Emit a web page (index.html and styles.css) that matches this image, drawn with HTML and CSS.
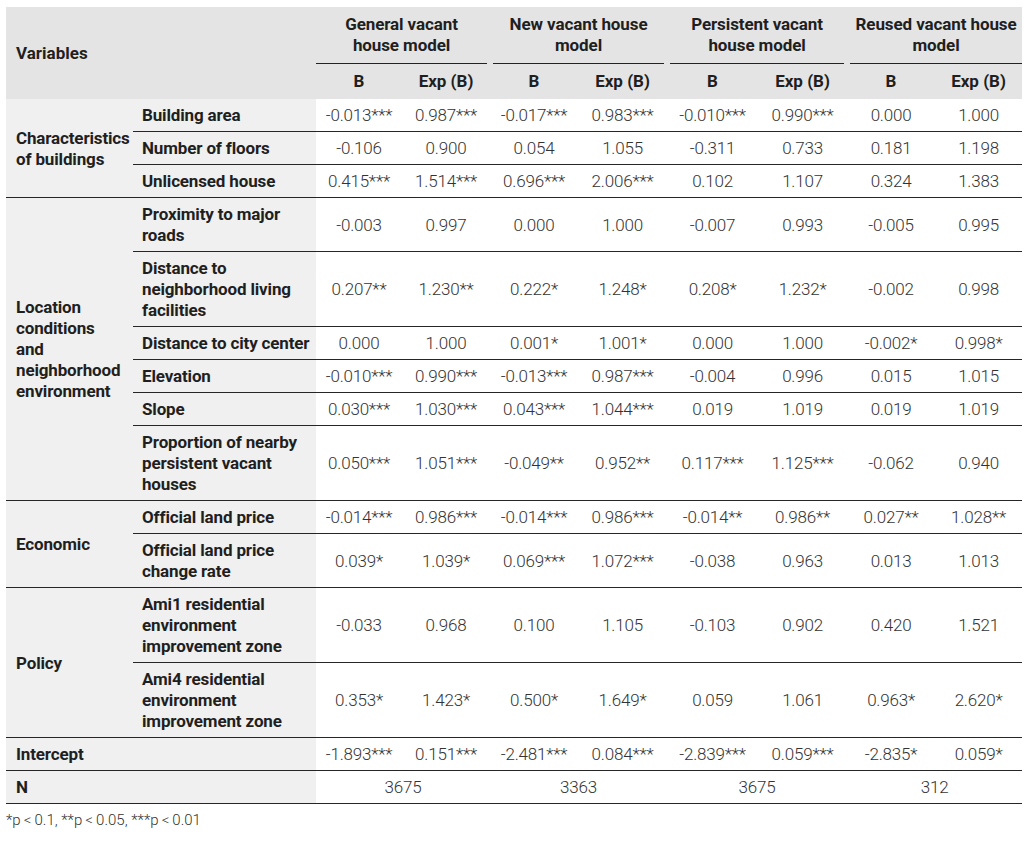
FILE: index.html
```html
<!DOCTYPE html>
<html lang="en">
<head>
<meta charset="utf-8">
<title>Logistic regression results</title>
<link rel="stylesheet" href="styles.css">
</head>
<body>
<table class="results">
  <colgroup>
    <col class="c-cat">
    <col class="c-var">
    <col class="c-d1">
    <col class="c-d2">
    <col class="c-d3">
    <col class="c-d4">
    <col class="c-d5">
    <col class="c-d6">
    <col class="c-d7">
    <col class="c-d8">
  </colgroup>
  <thead>
    <tr class="h1">
      <th class="h-var" colspan="2" rowspan="2">Variables</th>
      <th class="h-group first" colspan="2"><div class="g-line">General vacant<br>house model</div></th>
      <th class="h-group" colspan="2"><div class="g-line">New vacant house<br>model</div></th>
      <th class="h-group" colspan="2"><div class="g-line">Persistent vacant<br>house model</div></th>
      <th class="h-group last" colspan="2"><div class="g-line">Reused vacant house<br>model</div></th>
    </tr>
    <tr class="h2">
      <th>B</th><th>Exp (B)</th>
      <th>B</th><th>Exp (B)</th>
      <th>B</th><th>Exp (B)</th>
      <th>B</th><th>Exp (B)</th>
    </tr>
  </thead>
  <tbody>
    <tr>
      <th class="cat" rowspan="3">Characteristics<br>of buildings</th>
      <th class="var">Building area</th>
      <td>-0.013***</td><td>0.987***</td><td>-0.017***</td><td>0.983***</td><td>-0.010***</td><td>0.990***</td><td>0.000</td><td>1.000</td>
    </tr>
    <tr>
      <th class="var">Number of floors</th>
      <td>-0.106</td><td>0.900</td><td>0.054</td><td>1.055</td><td>-0.311</td><td>0.733</td><td>0.181</td><td>1.198</td>
    </tr>
    <tr>
      <th class="var">Unlicensed house</th>
      <td>0.415***</td><td>1.514***</td><td>0.696***</td><td>2.006***</td><td>0.102</td><td>1.107</td><td>0.324</td><td>1.383</td>
    </tr>
    <tr>
      <th class="cat" rowspan="6">Location<br>conditions<br>and<br>neighborhood<br>environment</th>
      <th class="var">Proximity to major<br>roads</th>
      <td>-0.003</td><td>0.997</td><td>0.000</td><td>1.000</td><td>-0.007</td><td>0.993</td><td>-0.005</td><td>0.995</td>
    </tr>
    <tr>
      <th class="var">Distance to<br>neighborhood living<br>facilities</th>
      <td>0.207**</td><td>1.230**</td><td>0.222*</td><td>1.248*</td><td>0.208*</td><td>1.232*</td><td>-0.002</td><td>0.998</td>
    </tr>
    <tr>
      <th class="var">Distance to city center</th>
      <td>0.000</td><td>1.000</td><td>0.001*</td><td>1.001*</td><td>0.000</td><td>1.000</td><td>-0.002*</td><td>0.998*</td>
    </tr>
    <tr>
      <th class="var">Elevation</th>
      <td>-0.010***</td><td>0.990***</td><td>-0.013***</td><td>0.987***</td><td>-0.004</td><td>0.996</td><td>0.015</td><td>1.015</td>
    </tr>
    <tr>
      <th class="var">Slope</th>
      <td>0.030***</td><td>1.030***</td><td>0.043***</td><td>1.044***</td><td>0.019</td><td>1.019</td><td>0.019</td><td>1.019</td>
    </tr>
    <tr>
      <th class="var">Proportion of nearby<br>persistent vacant<br>houses</th>
      <td>0.050***</td><td>1.051***</td><td>-0.049**</td><td>0.952**</td><td>0.117***</td><td>1.125***</td><td>-0.062</td><td>0.940</td>
    </tr>
    <tr>
      <th class="cat" rowspan="2">Economic</th>
      <th class="var">Official land price</th>
      <td>-0.014***</td><td>0.986***</td><td>-0.014***</td><td>0.986***</td><td>-0.014**</td><td>0.986**</td><td>0.027**</td><td>1.028**</td>
    </tr>
    <tr>
      <th class="var">Official land price<br>change rate</th>
      <td>0.039*</td><td>1.039*</td><td>0.069***</td><td>1.072***</td><td>-0.038</td><td>0.963</td><td>0.013</td><td>1.013</td>
    </tr>
    <tr>
      <th class="cat" rowspan="2">Policy</th>
      <th class="var">Ami1 residential<br>environment<br>improvement zone</th>
      <td>-0.033</td><td>0.968</td><td>0.100</td><td>1.105</td><td>-0.103</td><td>0.902</td><td>0.420</td><td>1.521</td>
    </tr>
    <tr>
      <th class="var">Ami4 residential<br>environment<br>improvement zone</th>
      <td>0.353*</td><td>1.423*</td><td>0.500*</td><td>1.649*</td><td>0.059</td><td>1.061</td><td>0.963*</td><td>2.620*</td>
    </tr>
    <tr>
      <th class="cat" colspan="2">Intercept</th>
      <td>-1.893***</td><td>0.151***</td><td>-2.481***</td><td>0.084***</td><td>-2.839***</td><td>0.059***</td><td>-2.835*</td><td>0.059*</td>
    </tr>
    <tr>
      <th class="cat" colspan="2">N</th>
      <td colspan="2">3675</td><td colspan="2">3363</td><td colspan="2">3675</td><td colspan="2">312</td>
    </tr>
  </tbody>
</table>
<p class="note">*p&thinsp;&lt;&thinsp;0.1, **p&thinsp;&lt;&thinsp;0.05, ***p&thinsp;&lt;&thinsp;0.01</p>
</body>
</html>
```

FILE: styles.css
```css
html, body {
  margin: 0;
  background: #ffffff;
}

body {
  padding: 7px 0 0 6px;
  font-family: Roboto, "Liberation Sans", sans-serif;
  color: #2a2a2a;
}

.results {
  border-collapse: collapse;
  table-layout: fixed;
  width: 1016px;
  font-size: 17px;
  line-height: 21px;
}

.c-cat { width: 127px; }
.c-var { width: 183px; }
.c-d1 { width: 86px; }
.c-d2 { width: 88px; }
.c-d3 { width: 88px; }
.c-d4 { width: 89px; }
.c-d5 { width: 91px; }
.c-d6 { width: 89px; }
.c-d7 { width: 88px; }
.c-d8 { width: 87px; }

thead th {
  background: #e4e4e4;
  font-weight: 700;
  color: #1f1f1f;
  text-align: center;
  padding: 0;
}

.h-var {
  text-align: left;
  padding-left: 10px;
  vertical-align: middle;
}

.h-group {
  padding-top: 7px;
  vertical-align: bottom;
  letter-spacing: -0.1px;
}

.g-line {
  margin: 0 3px;
  padding-bottom: 7px;
  border-bottom: 1px solid #222222;
}

.h-group.first .g-line { margin-left: 0; }
.h-group.last .g-line { margin-right: 0; }

.h2 th {
  padding: 7px 0;
}

tbody th,
tbody td {
  padding: 6px 0 5px;
  border-bottom: 1px solid #262626;
  vertical-align: middle;
}

tbody th {
  background: #f0f0f0;
  font-weight: 700;
  color: #1f1f1f;
  text-align: left;
  white-space: nowrap;
  letter-spacing: -0.15px;
}

.cat {
  padding-left: 10px;
}

.var {
  padding-left: 9px;
}

tbody td {
  text-align: center;
  font-weight: 300;
  color: #333333;
  white-space: nowrap;
  letter-spacing: -0.2px;
}

.note {
  margin: 6px 0 0;
  font-size: 15px;
  line-height: 20px;
  font-weight: 300;
  color: #333333;
}
```
